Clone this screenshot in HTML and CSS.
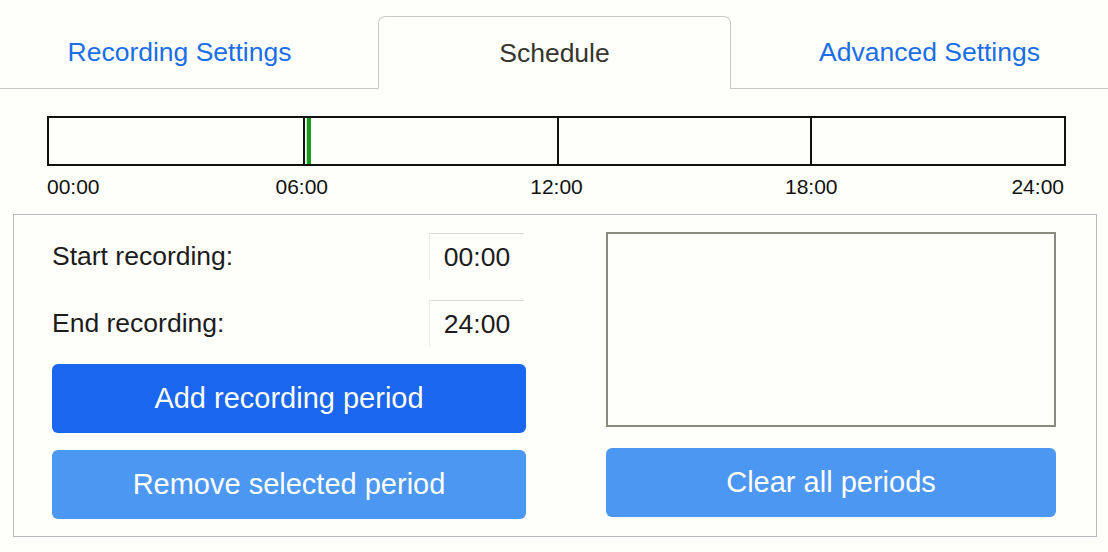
FILE: index.html
```html
<!DOCTYPE html>
<html lang="en">
<head>
<meta charset="utf-8">
<title>Schedule</title>
<link rel="stylesheet" href="styles.css">
</head>
<body>
<div class="tabs">
  <div class="tab">Recording Settings</div>
  <div class="tab active">Schedule</div>
  <div class="tab">Advanced Settings</div>
</div>

<div class="timeline">
  <div class="track">
    <div class="seg"></div>
    <div class="seg"></div>
    <div class="seg"></div>
    <div class="seg"></div>
    <div class="now" style="left: 25.42%"></div>
  </div>
  <div class="scale">
    <span class="tick first" style="left: 0%">00:00</span>
    <span class="tick" style="left: 25%">06:00</span>
    <span class="tick" style="left: 50%">12:00</span>
    <span class="tick" style="left: 75%">18:00</span>
    <span class="tick last" style="left: 100%">24:00</span>
  </div>
</div>

<div class="panel">
  <div class="col-left">
    <div class="field">
      <label class="label" for="start">Start recording:</label>
      <input class="time" id="start" type="text" value="00:00" readonly>
    </div>
    <div class="field second">
      <label class="label" for="end">End recording:</label>
      <input class="time" id="end" type="text" value="24:00" readonly>
    </div>
    <button class="btn primary">Add recording period</button>
    <button class="btn light">Remove selected period</button>
  </div>
  <div class="col-right">
    <div class="listbox" role="listbox"></div>
    <button class="btn light clear">Clear all periods</button>
  </div>
</div>
</body>
</html>
```

FILE: styles.css
```css
html, body {
  margin: 0;
  padding: 0;
}

body {
  width: 1108px;
  height: 552px;
  overflow: hidden;
  background: #fefefa;
  font-family: "Liberation Sans", Arial, Helvetica, sans-serif;
  color: #1c1c1c;
}

/* ---------- tabs ---------- */
.tabs {
  display: flex;
  align-items: flex-start;
  gap: 22px;
  padding: 16px 0 0 3px;
  height: 72px;
  border-bottom: 1px solid #c9c9c9;
}

.tab {
  box-sizing: border-box;
  width: 353px;
  height: 72px;
  display: flex;
  align-items: center;
  justify-content: center;
  font-size: 26.5px;
  color: #1a6ee8;
}

.tab.active {
  height: 73px;
  margin-bottom: -1px;
  border: 1px solid #c9c9c9;
  border-bottom: none;
  border-radius: 7px 7px 0 0;
  background: #fefefa;
  color: #36362e;
}

/* ---------- timeline ---------- */
.timeline {
  margin: 27px 42px 0 47px;
}

.track {
  position: relative;
  box-sizing: border-box;
  height: 50px;
  border: 2px solid #111;
  display: grid;
  grid-template-columns: repeat(4, 1fr);
}

.seg {
  box-sizing: border-box;
}

.seg + .seg {
  border-left: 2px solid #111;
}

.now {
  position: absolute;
  top: 0;
  bottom: 0;
  width: 4px;
  background: #1c9c1c;
  box-shadow: -1px 0 0 #bfe6bf;
}

.scale {
  position: relative;
  height: 24px;
  margin-top: 9px;
  font-size: 21px;
  line-height: 24px;
  color: #111;
}

.tick {
  position: absolute;
  top: 0;
  transform: translateX(-50%);
  white-space: nowrap;
}

.tick.first {
  transform: none;
}

.tick.last {
  transform: translateX(calc(-100% - 2px));
}

/* ---------- panel ---------- */
.panel {
  display: flex;
  gap: 80px;
  margin: 15px 11px 0 13px;
  padding: 18px 40px 17px 38px;
  border: 1px solid #b9b9be;
}

.col-left {
  width: 474px;
  display: flex;
  flex-direction: column;
}

.col-right {
  width: 450px;
  margin-top: -1px;
  display: flex;
  flex-direction: column;
}

.field {
  height: 47px;
  display: flex;
  align-items: center;
  justify-content: space-between;
}

.field.second {
  margin-top: 20px;
}

.label {
  font-size: 26.5px;
  color: #1c1c1c;
}

.time {
  box-sizing: border-box;
  width: 95px;
  height: 47px;
  margin: 0 2px 0 0;
  padding: 0;
  border: none;
  border-top: 1px solid #dadada;
  border-left: 1px solid #e8e8e8;
  background: transparent;
  font-family: "Liberation Sans", Arial, Helvetica, sans-serif;
  font-size: 26.5px;
  color: #1c1c1c;
  text-align: center;
  outline: none;
}

.btn {
  box-sizing: border-box;
  height: 69px;
  width: 100%;
  border: none;
  border-radius: 6px;
  font-family: "Liberation Sans", Arial, Helvetica, sans-serif;
  font-size: 29px;
  color: #fff;
  padding: 0;
}

.btn.primary {
  margin-top: 17px;
  background: #1a66ee;
}

.btn.light {
  margin-top: 17px;
  background: #4c97f2;
}

.btn.light.clear {
  margin-top: 21px;
}

.listbox {
  box-sizing: border-box;
  height: 195px;
  border: 2px solid #8a8a7c;
}
```
